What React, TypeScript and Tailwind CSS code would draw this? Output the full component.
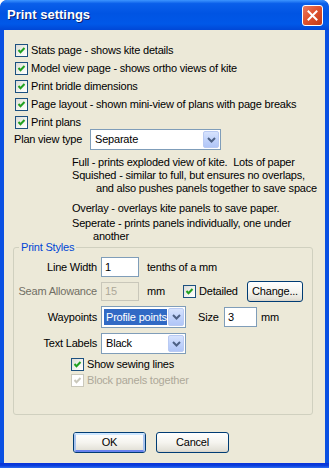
import React from 'react';

const font = "font-['Tahoma','Liberation_Sans',Arial,sans-serif]";

function Check({ checked = true, disabled = false }: { checked?: boolean; disabled?: boolean }) {
  return (
    <span
      className={
        'flex items-center justify-center w-[13px] h-[13px] shrink-0 border ' +
        (disabled
          ? 'border-[#CAC8BB] bg-white'
          : 'border-[#1C5180] bg-[linear-gradient(135deg,#DCDCD7_0%,#F4F4F0_60%,#FFFFFF_100%)]')
      }
    >
      {checked && (
        <svg width="11" height="11" viewBox="0 0 11 11">
          <polyline
            points="2.5,5 4.5,7.2 8.5,3"
            fill="none"
            stroke={disabled ? '#CAC8BB' : '#21A121'}
            strokeWidth="2"
          />
        </svg>
      )}
    </span>
  );
}

function CheckRow({ label }: { label: string }) {
  return (
    <div className="flex items-center h-[18px]">
      <Check />
      <span className="ml-[3px]">{label}</span>
    </div>
  );
}

function DropArrow() {
  return (
    <span className="flex items-center justify-center w-[16px] shrink-0 self-stretch my-[1px] mr-[1px] rounded-[2px] border border-[#B9CAF3] bg-[linear-gradient(180deg,#D7E3FD_0%,#C1D3FB_50%,#B1C6F7_100%)]">
      <svg width="9" height="6" viewBox="0 0 9 6">
        <polyline points="1,1 4.5,4.5 8,1" fill="none" stroke="#4D6185" strokeWidth="2" />
      </svg>
    </span>
  );
}

function Select({ value, width, selected = false, height }: { value: string; width: string; selected?: boolean; height: string }) {
  return (
    <div className={`flex items-stretch bg-white border border-[#7F9DB9] ${width} ${height}`}>
      <div className="flex-1 min-w-0 flex items-center pl-[2px] pr-[1px] py-[2px]">
        <span
          className={
            'flex items-center h-full w-full pl-[2px] overflow-hidden ' + (selected ? 'bg-[#316AC5] text-white' : 'text-black')
          }
        >
          {value}
        </span>
      </div>
      <DropArrow />
    </div>
  );
}

function Button({ label, focused = false }: { label: string; focused?: boolean }) {
  return (
    <div className="w-[73px] h-[21px] rounded-[3px] border border-[#003C74] bg-[linear-gradient(180deg,#FFFFFF_0%,#F5F4EF_50%,#E3E1D8_90%,#D6D0C5_100%)] flex">
      <div
        className={
          'flex-1 flex items-center justify-center rounded-[2px] ' +
          (focused ? 'border-2 border-[#A9C4EE] border-t-[#CEE7FF] border-b-[#6982EE]' : '')
        }
      >
        {label}
      </div>
    </div>
  );
}

export default function App() {
  return (
    <div className={`w-[329px] h-[468px] flex flex-col rounded-t-[7px] bg-[#0A50E2] text-[11px] tracking-[-0.2px] whitespace-nowrap text-black ${font} overflow-hidden`}>
      {/* Title bar */}
      <div className="h-[30px] shrink-0 flex items-center justify-between pl-[7px] pr-[6px] rounded-t-[7px] bg-[linear-gradient(180deg,#3D95FF_0%,#0A5FEA_12%,#0054E3_45%,#0058E8_80%,#0047D6_100%)]">
        <span className="text-white font-bold text-[13px] tracking-normal [text-shadow:1px_1px_0_#0A1F70] font-['Trebuchet_MS','Liberation_Sans',sans-serif]">
          Print settings
        </span>
        <span className="w-[21px] h-[21px] rounded-[3px] border border-white bg-[linear-gradient(135deg,#E97B63_0%,#E0532F_45%,#C13A17_100%)] flex items-center justify-center">
          <svg width="11" height="11" viewBox="0 0 11 11">
            <path d="M1.5 1.5 L9.5 9.5 M9.5 1.5 L1.5 9.5" stroke="white" strokeWidth="2" strokeLinecap="square" />
          </svg>
        </span>
      </div>

      {/* Client area */}
      <div className="flex-1 mx-[4px] bg-[#ECE9D8] flex flex-col pt-[11px]">
        <div className="pl-[11px]">
          <CheckRow label="Stats page - shows kite details" />
          <CheckRow label="Model view page - shows ortho views of kite" />
          <CheckRow label="Print bridle dimensions" />
          <CheckRow label="Page layout - shown mini-view of plans with page breaks" />
          <CheckRow label="Print plans" />
        </div>

        <div className="flex items-center h-[21px] -mt-[2px] pl-[10px]">
          <span className="w-[76px]">Plan view type</span>
          <Select value="Separate" width="w-[131px]" height="h-[21px]" />
        </div>

        <div className="mt-[6px] pl-[68px] leading-[13px]">
          <div>Full - prints exploded view of kite.&nbsp; Lots of paper</div>
          <div>Squished - similar to full, but ensures no overlaps,</div>
          <div className="pl-[24px]">and also pushes panels together to save space</div>
          <div className="mt-[7px]">Overlay - overlays kite panels to save paper.</div>
          <div className="mt-[2px]">Seperate - prints panels individually, one under</div>
          <div className="pl-[21px]">another</div>
        </div>

        {/* Print Styles group */}
        <div className="mt-[4px] ml-[9px] w-[300px] border border-[#D0D0BF] rounded-[3px] pb-[26px]">
          <div className="-mt-[7px] ml-[5px] w-fit px-[2px] h-[13px] leading-[13px] bg-[#ECE9D8] text-[#0046D5]">
            Print Styles
          </div>

          <div className="mt-[3px] flex items-center h-[20px]">
            <span className="w-[83px] text-right">Line Width</span>
            <div className="ml-[4px] w-[38px] h-[20px] bg-white border border-[#7F9DB9] flex items-center pl-[3px]">1</div>
            <span className="ml-[8px]">tenths of a mm</span>
          </div>

          <div className="mt-[4px] flex items-center h-[21px]">
            <span className="w-[83px] text-right text-[#716F64]">Seam Allowance</span>
            <div className="ml-[4px] w-[38px] h-[19px] bg-[#ECE9D8] border border-[#C9C7BA] flex items-center pl-[3px] text-[#ACA899]">15</div>
            <span className="ml-[8px] w-[36px]">mm</span>
            <Check />
            <span className="ml-[3px] w-[48px]">Detailed</span>
            <div className="w-[56px] h-[21px] rounded-[3px] border border-[#003C74] bg-[linear-gradient(180deg,#FFFFFF_0%,#F5F4EF_50%,#E3E1D8_90%,#D6D0C5_100%)] flex items-center justify-center">
              Change...
            </div>
          </div>

          <div className="mt-[4px] flex items-center h-[22px]">
            <span className="w-[83px] text-right">Waypoints</span>
            <div className="ml-[4px]">
              <Select value="Profile points" width="w-[85px]" height="h-[22px]" selected />
            </div>
            <span className="ml-[12px] w-[26px]">Size</span>
            <div className="w-[33px] h-[20px] bg-white border border-[#7F9DB9] flex items-center pl-[3px]">3</div>
            <span className="ml-[4px]">mm</span>
          </div>

          <div className="mt-[5px] flex items-center h-[21px]">
            <span className="w-[83px] text-right">Text Labels</span>
            <div className="ml-[4px]">
              <Select value="Black" width="w-[85px]" height="h-[21px]" />
            </div>
          </div>

          <div className="mt-[2px] pl-[57px]">
            <div className="flex items-center h-[16px]">
              <Check />
              <span className="ml-[3px]">Show sewing lines</span>
            </div>
            <div className="flex items-center h-[16px]">
              <Check disabled />
              <span className="ml-[3px] text-[#ACA899]">Block panels together</span>
            </div>
          </div>
        </div>

        <div className="mt-[17px] pl-[69px] flex gap-[10px]">
          <Button label="OK" focused />
          <Button label="Cancel" />
        </div>
      </div>

      <div className="h-[5px] shrink-0 bg-[linear-gradient(180deg,#0831D9_0%,#0A3DDB_50%,#2E6DF2_100%)]" />
    </div>
  );
}
